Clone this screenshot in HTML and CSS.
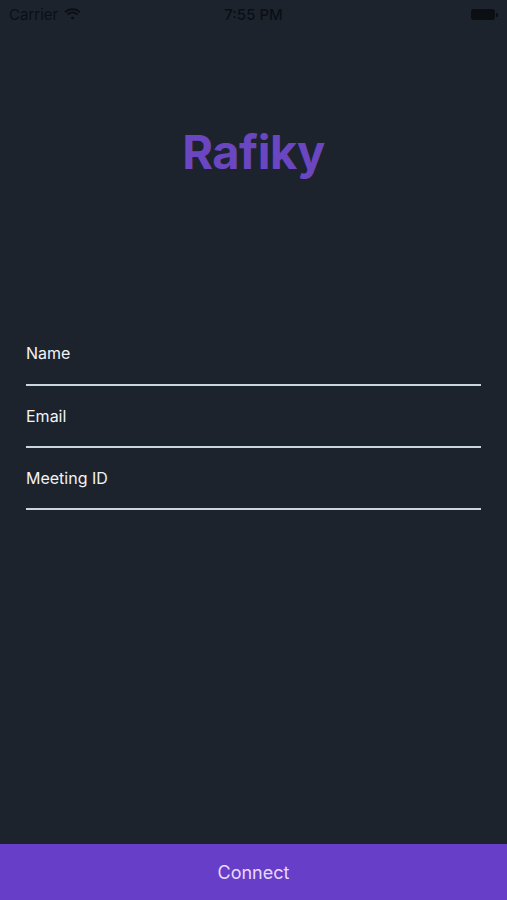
FILE: index.html
```html
<!DOCTYPE html>
<html>
<head>
<meta charset="utf-8">
<link rel="stylesheet" href="styles.css">
</head>
<body>
<div class="screen">
  <div class="status">
    <div class="status-left">
      <span>Carrier</span>
      <svg width="17" height="12" viewBox="0 0 17 12"><path d="M8.5 2.2c2.6 0 5 1 6.8 2.7l1.3-1.4C14.4 1.4 11.6.2 8.5.2S2.6 1.4.4 3.5l1.3 1.4C3.5 3.2 5.9 2.2 8.5 2.2z" fill="#0b0f14"/><path d="M8.5 5.6c1.6 0 3.1.6 4.3 1.7l1.3-1.4c-1.5-1.4-3.5-2.3-5.6-2.3S4.4 4.5 2.9 5.9l1.3 1.4c1.2-1.1 2.7-1.7 4.3-1.7z" fill="#0b0f14"/><path d="M8.5 8.7c.8 0 1.5.3 2 .8L8.5 11.8 6.5 9.5c.5-.5 1.2-.8 2-.8z" fill="#0b0f14"/></svg>
    </div>
    <div class="status-time">7:55 PM</div>
    <div class="status-right">
      <div class="battery"></div>
    </div>
  </div>
  <div class="title-area">
    <h1 class="title">Rafiky</h1>
  </div>
  <div class="form">
    <div class="field"><span class="label">Name</span></div>
    <div class="field"><span class="label">Email</span></div>
    <div class="field"><span class="label">Meeting ID</span></div>
  </div>
  <div class="spacer"></div>
  <button class="connect">Connect</button>
</div>
</body>
</html>
```

FILE: styles.css
```css
* { box-sizing: border-box; }
html, body { margin: 0; padding: 0; background: #1c232d; }
body { font-family: Inter, "Noto Sans", sans-serif; }
.screen {
  width: 507px;
  height: 900px;
  display: flex;
  flex-direction: column;
  background: #1c232d;
}
.status {
  height: 28px;
  display: flex;
  align-items: center;
  justify-content: space-between;
  padding: 0 12px 0 9px;
  color: #0b0f14;
  font-size: 15px;
  position: relative;
}
.status-left { display: flex; align-items: center; gap: 6px; }
.status-time {
  position: absolute;
  left: 0; right: 0;
  text-align: center;
  font-weight: 500;
}
.status-right { display: flex; align-items: center; }
.battery {
  width: 24px;
  height: 11px;
  border-radius: 3px;
  background: #0b0f14;
  position: relative;
}
.battery::after {
  content: "";
  position: absolute;
  right: -3px; top: 4px;
  width: 2px; height: 4px;
  background: #0b0f14;
  border-radius: 0 1px 1px 0;
}
.title-area {
  height: 250px;
  display: flex;
  justify-content: center;
  padding-top: 94px;
}
.title {
  margin: 0;
  font-size: 47px;
  font-weight: 700;
  color: #6b46c1;
  line-height: 60px;
  height: 60px;
  letter-spacing: -0.5px;
}
.form {
  padding: 56px 26px 0;
  display: flex;
  flex-direction: column;
}
.field {
  height: 62px;
  border-bottom: 2px solid #cbd5e0;
  display: flex;
  align-items: flex-start;
}
.field:first-child { height: 52px; }
.label {
  color: #f1f3f6;
  font-size: 16px;
  line-height: 20px;
  padding-top: 20px;
}
.field:first-child .label { padding-top: 9px; }
.spacer { flex: 1; }
.connect {
  height: 56px;
  border: none;
  background: #673ec8;
  color: #e9d8fd;
  font-family: Inter, "Noto Sans", sans-serif;
  font-size: 18px;
  width: 100%;
  padding: 0;
}
```
